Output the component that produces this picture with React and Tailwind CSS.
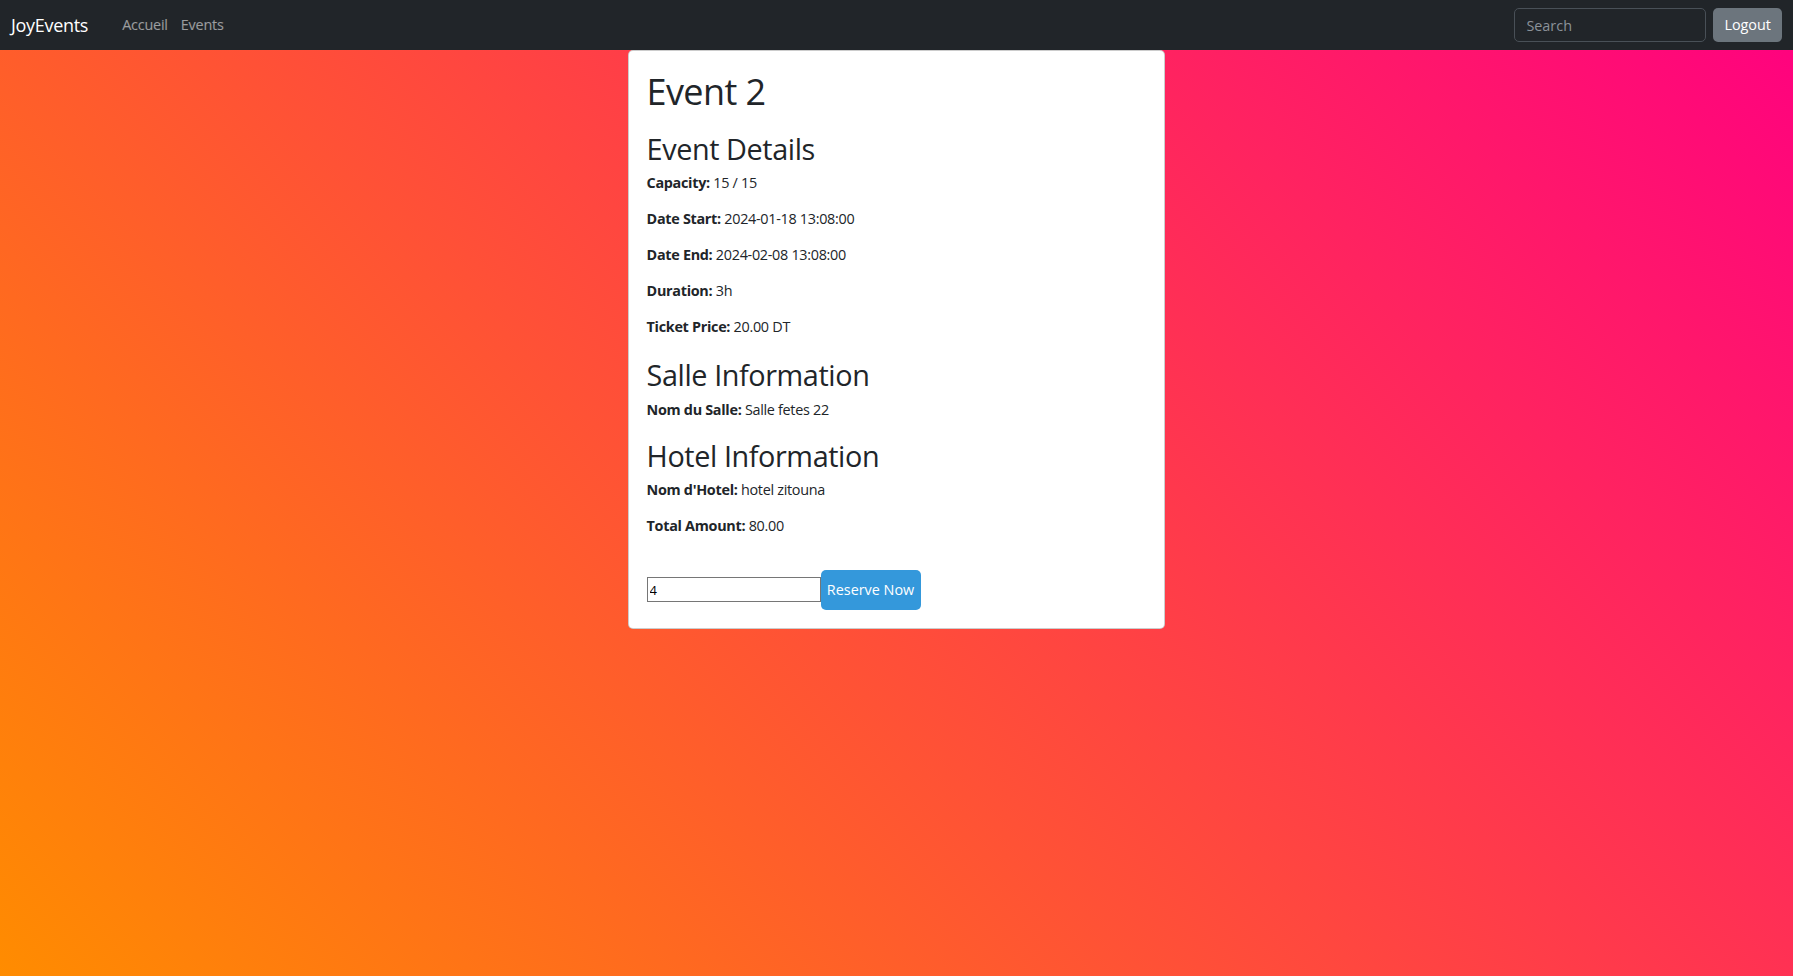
export default function App() {
  const details = [
    ['Capacity:', '15 / 15'],
    ['Date Start:', '2024-01-18 13:08:00'],
    ['Date End:', '2024-02-08 13:08:00'],
    ['Duration:', '3h'],
    ['Ticket Price:', '20.00 DT'],
  ];

  return (
    <div
      className="min-h-screen bg-[linear-gradient(45deg,#ff8c00,#ff0080)] text-[#212529]"
      style={{ fontFamily: '"Open Sans", "Noto Sans", sans-serif' }}
    >
      {/* Navbar */}
      <nav className="bg-[#212529] h-[50px] flex items-center justify-between pl-[11px] pr-[11px]">
        <div className="flex items-center">
          <span className="text-[18px] text-white leading-[30px] tracking-[-0.3px]">JoyEvents</span>
          <div className="flex items-center ml-[34px] gap-[13px] text-[14.4px] text-white/55 tracking-[-0.2px]">
            <a href="#">Accueil</a>
            <a href="#">Events</a>
          </div>
        </div>
        <div className="flex items-center gap-[7px]">
          <input
            type="search"
            placeholder="Search"
            className="w-[192px] h-[34px] rounded-[5px] border border-[#495057] bg-[#212529] px-[11px] text-[14.4px] text-white placeholder:text-[#8b9299] outline-none"
          />
          <button className="h-[34px] px-[11px] rounded-[5px] bg-[#6c757d] text-white text-[14.4px]">
            Logout
          </button>
        </div>
      </nav>

      {/* Event card */}
      <div className="w-[30%] mx-auto bg-white border border-black/20 rounded-[5px] p-[18px]">
        <h1 className="text-[36px] leading-[43px] mt-[1px] mb-[19px] tracking-[-0.6px]">Event 2</h1>

        <h2 className="text-[28.8px] leading-[34.5px] mb-[5.5px] tracking-[-0.4px]">Event Details</h2>
        <div className="tracking-[-0.3px]">
          {details.map(([label, value]) => (
            <p key={label} className="text-[14.4px] leading-[21.6px] mb-[14.4px]">
              <strong className="font-bold">{label}</strong> {value}
            </p>
          ))}
        </div>

        <h2 className="text-[28.8px] leading-[34.5px] mt-[20px] mb-[6px] tracking-[-0.4px]">Salle Information</h2>
        <p className="text-[14.4px] leading-[21.6px] tracking-[-0.3px] pt-[1px]">
          <strong className="font-bold">Nom du Salle:</strong> Salle fetes 22
        </p>

        <h2 className="text-[28.8px] leading-[34.5px] mt-[18px] mb-[6px] tracking-[-0.4px]">Hotel Information</h2>
        <p className="text-[14.4px] leading-[21.6px] mb-[14.4px] tracking-[-0.3px]">
          <strong className="font-bold">Nom d'Hotel:</strong> hotel zitouna
        </p>
        <p className="text-[14.4px] leading-[21.6px] tracking-[-0.3px]">
          <strong className="font-bold">Total Amount:</strong> 80.00
        </p>

        <form className="flex items-center mt-[33px]" onSubmit={(e) => e.preventDefault()}>
          <input
            type="number"
            defaultValue="4"
            className="w-[174px] h-[25px] border border-[#767676] px-[2px] text-[13px] text-black outline-none"
          />
          <button className="h-[40px] w-[100px] rounded-[5px] bg-[#3498db] text-white text-[14.4px]">
            Reserve Now
          </button>
        </form>
      </div>
    </div>
  );
}
